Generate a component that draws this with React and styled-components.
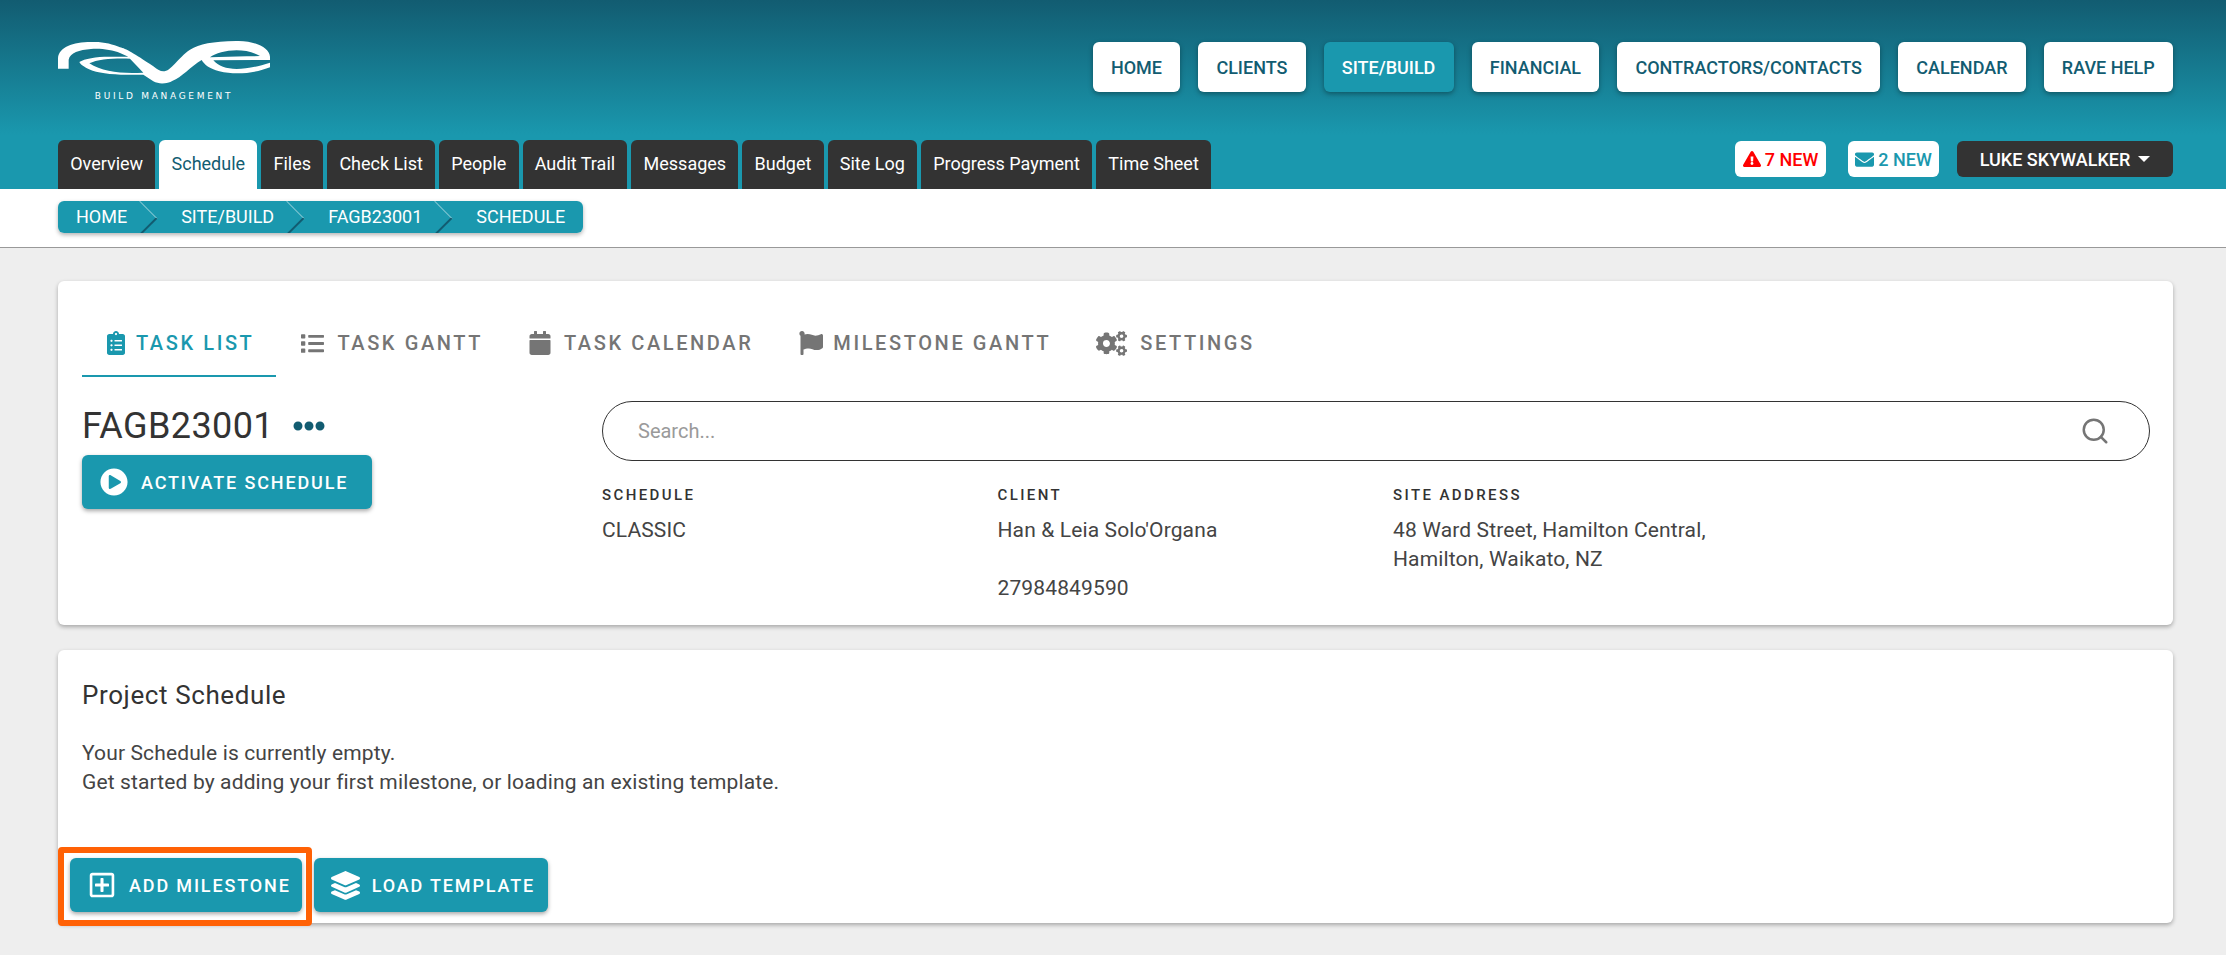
import React from 'react';
import styled, { createGlobalStyle } from 'styled-components';
import { FaClipboardList, FaList, FaCalendar, FaFlag, FaCogs, FaPlayCircle, FaExclamationTriangle, FaEnvelope, FaEllipsisH, FaRegPlusSquare, FaLayerGroup } from 'react-icons/fa';
import { FiSearch } from 'react-icons/fi';

const Global = createGlobalStyle`
  html, body { margin: 0; padding: 0; height: 955px; overflow: hidden; background: #eee; font-family: Roboto, "Liberation Sans", sans-serif; }
  * { box-sizing: border-box; }
`;
const Header = styled.header`
  height: 189px; padding: 42px 53px 0 58px;
  background: linear-gradient(180deg, #125c71 0, #1a98ae 135px, #1a98ae 100%);
  display: flex; flex-direction: column;
`;
const TopRow = styled.div`display: flex; justify-content: space-between; height: 98px;`;
const LogoBox = styled.div`display: flex; flex-direction: column; align-items: center; width: 212px; margin-top: -1px;`;
const LogoText = styled.span`
  color: #fff; font-size: 9px; letter-spacing: 2.7px; line-height: 10px; margin-top: 6px; white-space: nowrap; font-family: "DejaVu Sans", sans-serif;
`;
const MainNav = styled.nav`display: flex; gap: 18px;`;
const NavButton = styled.a`
  height: 50px; padding: 0 18.2px; display: flex; align-items: center; border-radius: 6px;
  font-size: 18px; font-weight: 500; white-space: nowrap;
  background: ${p => p.$active ? '#1a98ae' : '#fff'}; color: ${p => p.$active ? '#fff' : '#125c71'};
  box-shadow: 0 2px 5px rgba(0,0,0,.35);
`;
const BottomRow = styled.div`display: flex; justify-content: space-between; align-items: flex-start; height: 49px;`;
const Tabs = styled.div`display: flex; gap: 4px; height: 49px;`;
const Tab = styled.a`
  display: flex; align-items: center; padding: 0 12.2px 2px; border-radius: 6px 6px 0 0; font-size: 18px; white-space: nowrap;
  background: ${p => p.$active ? '#fff' : '#333'}; color: ${p => p.$active ? '#125c71' : '#fff'};
`;
const Status = styled.div`display: flex; align-items: center; margin-top: 1px;`;
const Badge = styled.span`
  width: 91px; height: 36px; background: #fff; border-radius: 6px; display: flex; align-items: center; justify-content: center; gap: 4px;
  font-size: 18px; font-weight: 500; color: ${p => p.$color}; margin-right: ${p => p.$mr}px;
`;
const UserMenu = styled.div`
  width: 216px; height: 36px; background: #333; color: #fff; border-radius: 6px; display: flex; align-items: center; justify-content: center; gap: 8px;
  font-size: 18px; font-weight: 500;
`;
const Caret = styled.i`border-left: 6px solid transparent; border-right: 6px solid transparent; border-top: 6px solid #fff;`;
const CrumbBar = styled.div`
  height: 59px; background: #fff; border-bottom: 1px solid #999; padding: 12px 0 0 58px;
`;
const Crumbs = styled.div`
  display: inline-flex; height: 32px; border-radius: 6px; background: #1a98ae; overflow: hidden;
`;
const CrumbWrap = styled.div`display: inline-flex; border-radius: 6px; box-shadow: 0 2px 4px rgba(0,0,0,.3);`;
const Crumb = styled.a`
  position: relative; display: flex; align-items: center; color: #fff; font-size: 18px; white-space: nowrap;
  padding: ${p => p.$first ? '0 14px 2px 18px' : p.$last ? '0 18px 2px 40px' : '0 14px 2px 40px'};
  &::after {
    content: ${p => p.$last ? 'none' : '""'}; position: absolute; right: -11px; top: 4.7px; width: 22.6px; height: 22.6px;
    transform: rotate(45deg);
    border-top: 1px solid rgba(255,255,255,.45); border-right: 2px solid #125c71;
  }
`;
const Main = styled.main`padding: 33px 53px 0 58px; display: flex; flex-direction: column; gap: 25px;`;
const Card = styled.section`
  background: #fff; border-radius: 6px; box-shadow: 0 2px 4px rgba(0,0,0,.3);
  padding: ${p => p.$pad}; height: ${p => p.$h}px;
`;
const PageTabs = styled.div`display: flex; height: 72px; margin-bottom: 24px;`;
const PageTab = styled.a`
  display: flex; align-items: center; gap: ${p => p.$gap}px; padding: 6px 22px 0 ${p => p.$pl}px; height: 72px; font-size: 20px; font-weight: 500; letter-spacing: 2.6px; white-space: nowrap;
  color: ${p => p.$active ? '#1a98ae' : '#757575'};
  border-bottom: 2px solid ${p => p.$active ? '#1a98ae' : 'transparent'};
`;
const Info = styled.div`display: grid; grid-template-columns: 520px 1fr;`;
const TitleRow = styled.div`display: flex; align-items: center; gap: 19px; height: 54px; padding-bottom: 4px;`;
const Title = styled.h1`margin: 0; font-size: 36px; font-weight: 400; color: #333; letter-spacing: .4px;`;
const ActionButton = styled.button`
  display: inline-flex; align-items: center; height: 54px; border: 0; border-radius: 6px; background: #1a98ae; color: #fff; padding: ${p => p.$pad};
  gap: ${p => p.$gap}px; font: 500 18px Roboto, sans-serif; letter-spacing: 1.85px; box-shadow: 0 2px 4px rgba(0,0,0,.35); white-space: nowrap;
`;
const Search = styled.div`
  height: 60px; border: 1px solid #333; border-radius: 30px; display: flex; align-items: center; justify-content: space-between; padding: 0 39px 0 35px;
  font-size: 20px; color: #9a9a9a; 
`;
const Details = styled.div`display: grid; grid-template-columns: 395.5px 395.5px 1fr; margin-top: 25px;`;
const Label = styled.div`font-size: 15px; font-weight: 500; letter-spacing: 2.4px; color: #333; line-height: 18px; margin-bottom: 12px;`;
const Value = styled.div`font-size: 21px; line-height: 29px; color: #444; letter-spacing: .13px; min-height: 29px;`;
const CardTitle = styled.h2`margin: 0 0 30px; font-size: 26px; font-weight: 400; color: #333; line-height: 28px; letter-spacing: .6px;`;
const Para = styled.p`margin: 0; font-size: 21px; line-height: 29px; color: #444; letter-spacing: .13px;`;
const Actions = styled.div`position: relative; display: flex; gap: 12px; margin: 61px 0 0 -12px;`;
const Highlight = styled.div`
  position: absolute; left: -12px; top: -11px; width: 254px; height: 79px; border: 6px solid #ff6105; border-radius: 4px; pointer-events: none;
`;

const Logo = () => (
  <svg width="212" height="44" viewBox="6 9 636 132" style={{ display: 'block' }}>
    <path
      fill="#fff"
      fillRule="evenodd"
      d="M6 92 L6 60 C9 28 50 12 105 12 C140 10 170 18 192 28 C210 32 232 45 292 85 C305 95 312 100 322 100 C345 100 365 60 402 35 C430 18 470 10 540 9 C600 8 640 30 642 56 L642 66 L472 67 C500 100 560 100 642 74 L642 88 C600 105 540 112 490 100 C460 92 445 80 437 66 C405 85 375 120 350 128 C335 137 310 140 292 130 L262 110 C200 112 140 108 110 98 C90 90 75 82 70 72 C85 62 120 56 160 56 L217 56 L192 45 C170 35 130 30 105 33 C70 35 42 45 38 65 L38 92 Z M100 76 C125 63 180 60 222 62 L262 104 C200 108 140 102 100 76 Z M462 58 C490 38 560 25 612 54 Z"
    />
  </svg>
);

const nav = ['HOME', 'CLIENTS', 'SITE/BUILD', 'FINANCIAL', 'CONTRACTORS/CONTACTS', 'CALENDAR', 'RAVE HELP'];
const tabs = ['Overview', 'Schedule', 'Files', 'Check List', 'People', 'Audit Trail', 'Messages', 'Budget', 'Site Log', 'Progress Payment', 'Time Sheet'];
const crumbs = ['HOME', 'SITE/BUILD', 'FAGB23001', 'SCHEDULE'];

export default function App() {
  return (
    <>
      <Global />
      <Header>
        <TopRow>
          <LogoBox>
            <Logo />
            <LogoText>BUILD MANAGEMENT</LogoText>
          </LogoBox>
          <MainNav>
            {nav.map(n => <NavButton key={n} $active={n === 'SITE/BUILD'}>{n}</NavButton>)}
          </MainNav>
        </TopRow>
        <BottomRow>
          <Tabs>
            {tabs.map(t => <Tab key={t} $active={t === 'Schedule'}>{t}</Tab>)}
          </Tabs>
          <Status>
            <Badge $color="#f00" $mr={22}><FaExclamationTriangle size={18} />7 NEW</Badge>
            <Badge $color="#1a98ae" $mr={18}><FaEnvelope size={19} />2 NEW</Badge>
            <UserMenu>LUKE SKYWALKER <Caret /></UserMenu>
          </Status>
        </BottomRow>
      </Header>
      <CrumbBar>
        <CrumbWrap>
          <Crumbs>
            {crumbs.map((c, i) => <Crumb key={c} $first={i === 0} $last={i === crumbs.length - 1}>{c}</Crumb>)}
          </Crumbs>
        </CrumbWrap>
      </CrumbBar>
      <Main>
        <Card $pad="24px 23px 0 24px" $h={344}>
          <PageTabs>
            <PageTab $active $pl={22} $gap={8}><FaClipboardList size={24} />TASK LIST</PageTab>
            <PageTab $pl={25} $gap={13}><FaList size={23} />TASK GANTT</PageTab>
            <PageTab $pl={23} $gap={12}><FaCalendar size={24} />TASK CALENDAR</PageTab>
            <PageTab $pl={24} $gap={10}><FaFlag size={24} />MILESTONE GANTT</PageTab>
            <PageTab $pl={23} $gap={13}><FaCogs size={31} />SETTINGS</PageTab>
          </PageTabs>
          <Info>
            <div>
              <TitleRow>
                <Title>FAGB23001</Title>
                <FaEllipsisH size={32} color="#125c71" />
              </TitleRow>
              <ActionButton $pad="0 24px 0 18px" $gap={13}><FaPlayCircle size={28} />ACTIVATE SCHEDULE</ActionButton>
            </div>
            <div>
              <Search>Search...<FiSearch size={30} color="#757575" /></Search>
              <Details>
                <div><Label>SCHEDULE</Label><Value>CLASSIC</Value></div>
                <div><Label>CLIENT</Label><Value>Han &amp; Leia Solo'Organa</Value><Value /><Value>27984849590</Value></div>
                <div><Label>SITE ADDRESS</Label><Value>48 Ward Street, Hamilton Central,</Value><Value>Hamilton, Waikato, NZ</Value></div>
              </Details>
            </div>
          </Info>
        </Card>
        <Card $pad="31px 24px 0" $h={273}>
          <CardTitle>Project Schedule</CardTitle>
          <Para>Your Schedule is currently empty.</Para>
          <Para>Get started by adding your first milestone, or loading an existing template.</Para>
          <Actions>
            <Highlight />
            <ActionButton $pad="0 11px 0 18px" $gap={13}><FaRegPlusSquare size={28} />ADD MILESTONE</ActionButton>
            <ActionButton $pad="0 13px 0 17px" $gap={12}><FaLayerGroup size={29} />LOAD TEMPLATE</ActionButton>
          </Actions>
        </Card>
      </Main>
    </>
  );
}
